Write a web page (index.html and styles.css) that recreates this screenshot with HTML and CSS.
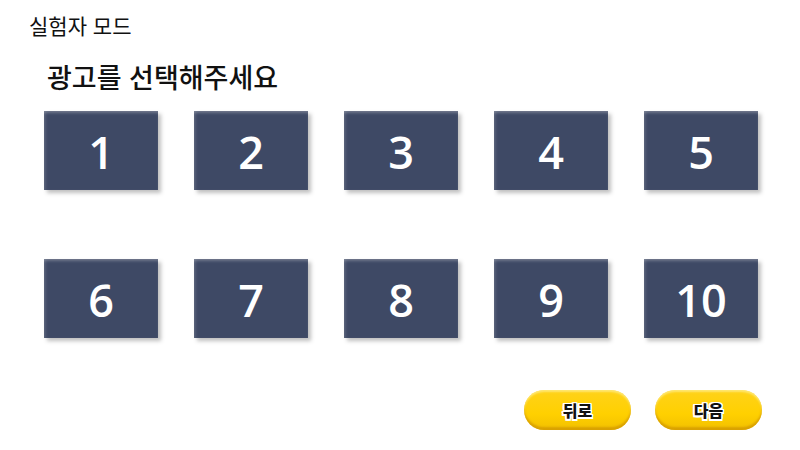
FILE: index.html
```html
<!DOCTYPE html>
<html lang="ko">
<head>
<meta charset="utf-8">
<link rel="stylesheet" href="styles.css">
</head>
<body>
<div class="page">
  <div class="mode">실험자 모드</div>
  <h1 class="title">광고를 선택해주세요</h1>
  <div class="grid">
    <div class="tile">1</div>
    <div class="tile">2</div>
    <div class="tile">3</div>
    <div class="tile">4</div>
    <div class="tile">5</div>
    <div class="tile">6</div>
    <div class="tile">7</div>
    <div class="tile">8</div>
    <div class="tile">9</div>
    <div class="tile">10</div>
  </div>
  <div class="actions">
    <button class="btn">뒤로</button>
    <button class="btn">다음</button>
  </div>
</div>
</body>
</html>
```
FILE: styles.css
```css
* { box-sizing: border-box; }
html, body { margin: 0; padding: 0; background: #fff; }
body {
  width: 800px;
  height: 450px;
  overflow: hidden;
  font-family: "Noto Sans CJK KR", "Noto Sans", sans-serif;
  color: #111;
}
.page {
  display: flex;
  flex-direction: column;
  padding: 11px 0 0 0;
}
.mode {
  font-size: 21px;
  line-height: 28px;
  padding-left: 29px;
  font-weight: 400;
}
.title {
  margin: 23px 0 0 0;
  padding-left: 47px;
  font-size: 27px;
  line-height: 30px;
  font-weight: 500;
}
.grid {
  display: grid;
  grid-template-columns: repeat(5, 114px);
  grid-auto-rows: 79px;
  column-gap: 36px;
  row-gap: 69px;
  margin-top: 19px;
  padding-left: 44px;
}
.tile {
  background: #3e4965;
  color: #fff;
  font-family: "Open Sans", "Noto Sans", sans-serif;
  font-size: 45px;
  font-weight: 600;
  display: flex;
  align-items: center;
  justify-content: center;
  box-shadow: 3px 3px 4px rgba(0,0,0,0.25), inset 0 3px 3px -1px rgba(255,255,255,0.25), inset 3px 0 3px -1px rgba(255,255,255,0.12);
  padding-top: 2px;
}
.actions {
  display: flex;
  justify-content: flex-end;
  gap: 24px;
  margin-top: 52px;
  padding-right: 38px;
}
.btn {
  width: 107px;
  height: 40px;
  border: none;
  border-radius: 20px;
  background: linear-gradient(#ffd21a, #ffd000 60%, #f2c000);
  box-shadow: inset 0 -3px 2px rgba(200,140,0,0.6), inset 0 2px 2px rgba(255,240,150,0.7);
  font-family: "Noto Sans CJK KR", sans-serif;
  font-size: 16px;
  font-weight: 900;
  color: #111;
  text-shadow: -1.5px -1.5px 0 #fff, 1.5px -1.5px 0 #fff, -1.5px 1.5px 0 #fff, 1.5px 1.5px 0 #fff, 0 1.5px 0 #fff, 0 -1.5px 0 #fff, 1.5px 0 0 #fff, -1.5px 0 0 #fff;
  padding: 0;
}
```
